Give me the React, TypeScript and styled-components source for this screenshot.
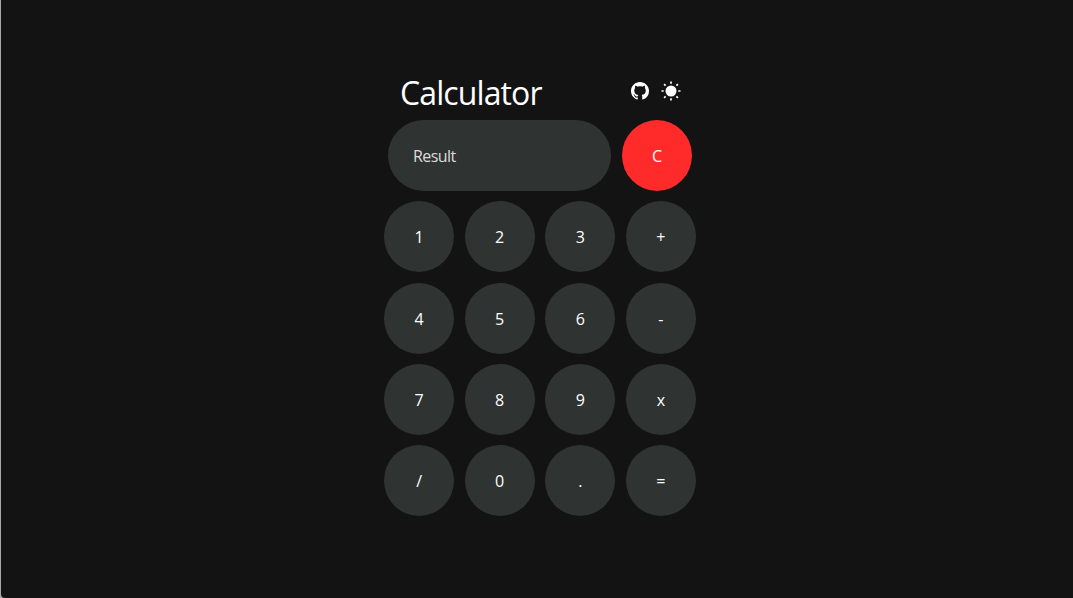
import React from "react";
import styled, { createGlobalStyle } from "styled-components";
import { BsGithub } from "react-icons/bs";

const GlobalStyle = createGlobalStyle`
  * { box-sizing: border-box; }
  body {
    margin: 0;
    background: #a8a8a8;
    color: #fff;
    font: 16px/24px "Open Sans", "Noto Sans", sans-serif;
  }
`;

const Page = styled.main`
  min-height: 598px;
  margin-left: 1px;
  padding: 73px 0 0 383px;
  background: #131313;
  border-bottom-left-radius: 4px;
`;

const Calculator = styled.section`
  width: 312px;
`;

const Header = styled.header`
  display: flex;
  justify-content: space-between;
  align-items: center;
  height: 37px;
  padding: 0 15.5px 0 16px;
`;

const Title = styled.h1`
  margin: 2px 0 0;
  font-size: 32px;
  line-height: 40px;
  font-weight: 400;
  letter-spacing: -0.9px;
`;

const Links = styled.nav`
  display: flex;
  align-items: center;
  gap: 11.5px;
  margin-bottom: 2px;
  svg { display: block; }
`;

const Display = styled.div`
  display: flex;
  gap: 11px;
  margin: 10px 4px 10.4px;
`;

const Result = styled.output`
  width: 223px;
  height: 71px;
  padding: 24px 25px;
  border-radius: 36px;
  background: #2f3332;
  color: #dcdcdc;
  line-height: 24px;
  letter-spacing: -0.55px;
`;

const Key = styled.button<{ $clear?: boolean }>`
  width: 70.2px;
  height: 71px;
  padding: ${(p) => (p.$clear ? 0 : "0.9px")} 0 0;
  border: 0;
  border-radius: 50%;
  background: ${(p) => (p.$clear ? "#ff2b2b" : "#2f3332")};
  color: #fff;
  font: inherit;
`;

const Keypad = styled.div`
  display: grid;
  grid-template-columns: repeat(4, 70.2px);
  column-gap: 10.4px;
  row-gap: 10.3px;
`;

const Sun = () => (
  <svg width="20" height="20" viewBox="0 0 20 20" fill="#fff" stroke="#fff" strokeWidth="1.7">
    <circle cx="10" cy="10" r="5.5" stroke="none" />
    <path d="M10 .5v2.2M10 17.3v2.2M.5 10h2.2M17.3 10h2.2M3.1 3.1l1.5 1.5M15.4 15.4l1.5 1.5M3.1 16.9l1.5-1.5M15.4 4.6l1.5-1.5" />
  </svg>
);

const keys = ["1", "2", "3", "+", "4", "5", "6", "-", "7", "8", "9", "x", "/", "0", ".", "="];

export default function App() {
  return (
    <>
      <GlobalStyle />
      <Page>
        <Calculator>
          <Header>
            <Title>Calculator</Title>
            <Links>
              <BsGithub size={18} />
              <Sun />
            </Links>
          </Header>
          <Display>
            <Result>Result</Result>
            <Key $clear>C</Key>
          </Display>
          <Keypad>
            {keys.map((k) => (
              <Key key={k}>{k}</Key>
            ))}
          </Keypad>
        </Calculator>
      </Page>
    </>
  );
}
